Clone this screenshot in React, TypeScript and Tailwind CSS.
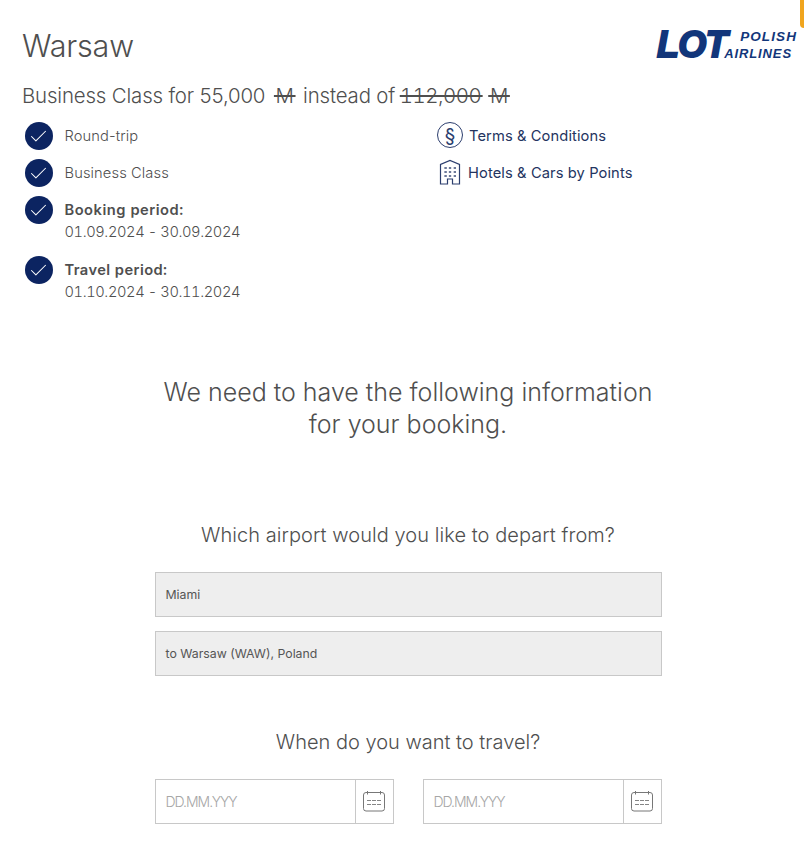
import { Check } from "lucide-react";

const font = { fontFamily: "Inter, 'Liberation Sans', sans-serif" };

function CheckDot() {
  return (
    <span className="flex h-7 w-7 shrink-0 items-center justify-center rounded-full bg-[#0c2461]">
      <Check className="h-[21px] w-[21px] text-white" strokeWidth={1.2} />
    </span>
  );
}

function Logo() {
  return (
    <div className="relative h-[26px] w-[140px] font-['Liberation_Sans'] font-bold text-[#12367a] italic">
      <span className="block text-[36px] leading-[26px] tracking-[-0.8px] [-webkit-text-stroke:2px_#12367a]">LOT</span>
      <span className="absolute top-[-3px] right-0 text-[13.5px] leading-[15px] tracking-[1.1px]">POLISH</span>
      <span className="absolute right-[5px] bottom-[-3px] text-[13px] leading-[15px] tracking-[0.9px]">AIRLINES</span>
    </div>
  );
}

function ParagraphIcon() {
  return (
    <span className="flex h-[26px] w-[26px] items-center justify-center rounded-full border border-[#2c3e6e] text-[19px] leading-none text-[#2c3e6e]">
      §
    </span>
  );
}

function HotelIcon() {
  return (
    <svg width="22" height="26" viewBox="0 0 22 26" fill="none" stroke="#2c3e6e" strokeWidth="1.2">
      <path d="M1.5 25V5.5L11 1.5l9.5 4V25H13.5V20h-5v5z" />
      <path d="M5 9h2.5M9.8 9h2.5M14.5 9H17M5 13h2.5M9.8 13h2.5M14.5 13H17M5 17h2.5M9.8 17h2.5M14.5 17H17M7 8v2M11 8v2M16 8v2M7 12v2M11 12v2M16 12v2M7 16v2M11 16v2M16 16v2" strokeWidth="0.9" />
    </svg>
  );
}

function CalendarIcon() {
  return (
    <svg width="22" height="21" viewBox="0 0 22 21" fill="none" stroke="#777777" strokeWidth="1">
      <rect x="0.5" y="1.5" width="21" height="18.5" rx="2.5" />
      <path d="M4.5 0v3.5M17.5 0v3.5" />
      <path d="M4 9.5h4M9 9.5h4M14 9.5h4M4 13.5h4M9 13.5h4M14 13.5h4" strokeWidth="0.9" />
    </svg>
  );
}

function DateField() {
  return (
    <div className="flex h-[45px] w-[239px] border border-[#c8c8c8] bg-white">
      <span className="flex flex-1 items-center pl-[10px] text-[14px] tracking-[-1px] text-[#a6a6a6]">DD.MM.YYY</span>
      <span className="flex w-[38px] items-center justify-center border-l border-[#c8c8c8]">
        <CalendarIcon />
      </span>
    </div>
  );
}

export default function App() {
  return (
    <main style={font} className="relative min-h-[854px] overflow-hidden bg-white font-light text-[#4f4f4f]">
      <div className="absolute top-0 right-0 h-7 w-1 rounded-bl-[4px] bg-[#f0a51e]" />

      <div className="px-[22px] pt-[26px]">
        <div className="-mr-[15px] flex items-start justify-between">
          <h1 className="text-[30.5px] leading-10 font-light tracking-[-0.2px]">Warsaw</h1>
          <div className="pt-[6px]">
            <Logo />
          </div>
        </div>

        <p className="mt-[15px] text-[20.4px] leading-[30px] tracking-[-0.15px]">
          Business Class for 55,000 <s className="mr-[2px] ml-[3px]">&#8202;M&#8202;</s> instead of{" "}
          <s className="-ml-px tracking-[-0.45px] tabular-nums">112,000&#8202;</s> <s>&#8202;M&#8202;</s>
        </p>

        <div className="mt-[11px] flex text-[14.7px] tracking-[0.1px]">
          <ul className="w-[415px]">
            <li className="flex h-[37px] items-start gap-[12px] pl-[2.5px]">
              <CheckDot />
              <span className="leading-7">Round-trip</span>
            </li>
            <li className="flex h-[37px] items-start gap-[12px] pl-[2.5px]">
              <CheckDot />
              <span className="leading-7">Business Class</span>
            </li>
            <li className="flex h-[60px] items-start gap-[12px] pl-[2.5px]">
              <CheckDot />
              <span className="mt-[3px] leading-[22px] tracking-[-0.42px] tabular-nums">
                <b className="block font-semibold tracking-[0.5px]">Booking period:</b>
                01.09.2024 - 30.09.2024
              </span>
            </li>
            <li className="flex items-start gap-[12px] pl-[2.5px]">
              <CheckDot />
              <span className="mt-[3px] leading-[22px] tracking-[-0.42px] tabular-nums">
                <b className="block font-semibold tracking-[0.4px]">Travel period:</b>
                01.10.2024 - 30.11.2024
              </span>
            </li>
          </ul>
          <ul className="font-normal text-[#24345f]">
            <li className="flex h-[37px] items-start gap-[6px]">
              <ParagraphIcon />
              <span className="leading-7">Terms &amp; Conditions</span>
            </li>
            <li className="flex h-[37px] items-start gap-[7px] pl-[2px]">
              <HotelIcon />
              <span className="leading-7">Hotels &amp; Cars by Points</span>
            </li>
          </ul>
        </div>
      </div>

      <section className="pl-3">
        <h2 className="mt-[73px] text-center text-[25px] leading-8 font-light">
          We need to have the following information
          <br />
          for your booking.
        </h2>

        <h3 className="mt-[79px] text-center text-[20px] leading-8 font-light tracking-[0.06px]">
          Which airport would you like to depart from?
        </h3>

        <div className="mx-auto mt-[21px] flex w-[507px] flex-col gap-[14px] text-[12.3px] font-normal text-[#555555]">
          <div className="flex h-[45px] items-center border border-[#c8c8c8] bg-[#eeeeee] pt-[1px] pl-[10px]">Miami</div>
          <div className="flex h-[45px] items-center border border-[#c8c8c8] bg-[#eeeeee] pt-[1px] pl-[10px]">to Warsaw (WAW), Poland</div>
        </div>

        <h3 className="mt-[50px] text-center text-[20px] leading-8 font-light">When do you want to travel?</h3>

        <div className="mx-auto mt-[21px] flex w-[507px] justify-between">
          <DateField />
          <DateField />
        </div>
      </section>
    </main>
  );
}
